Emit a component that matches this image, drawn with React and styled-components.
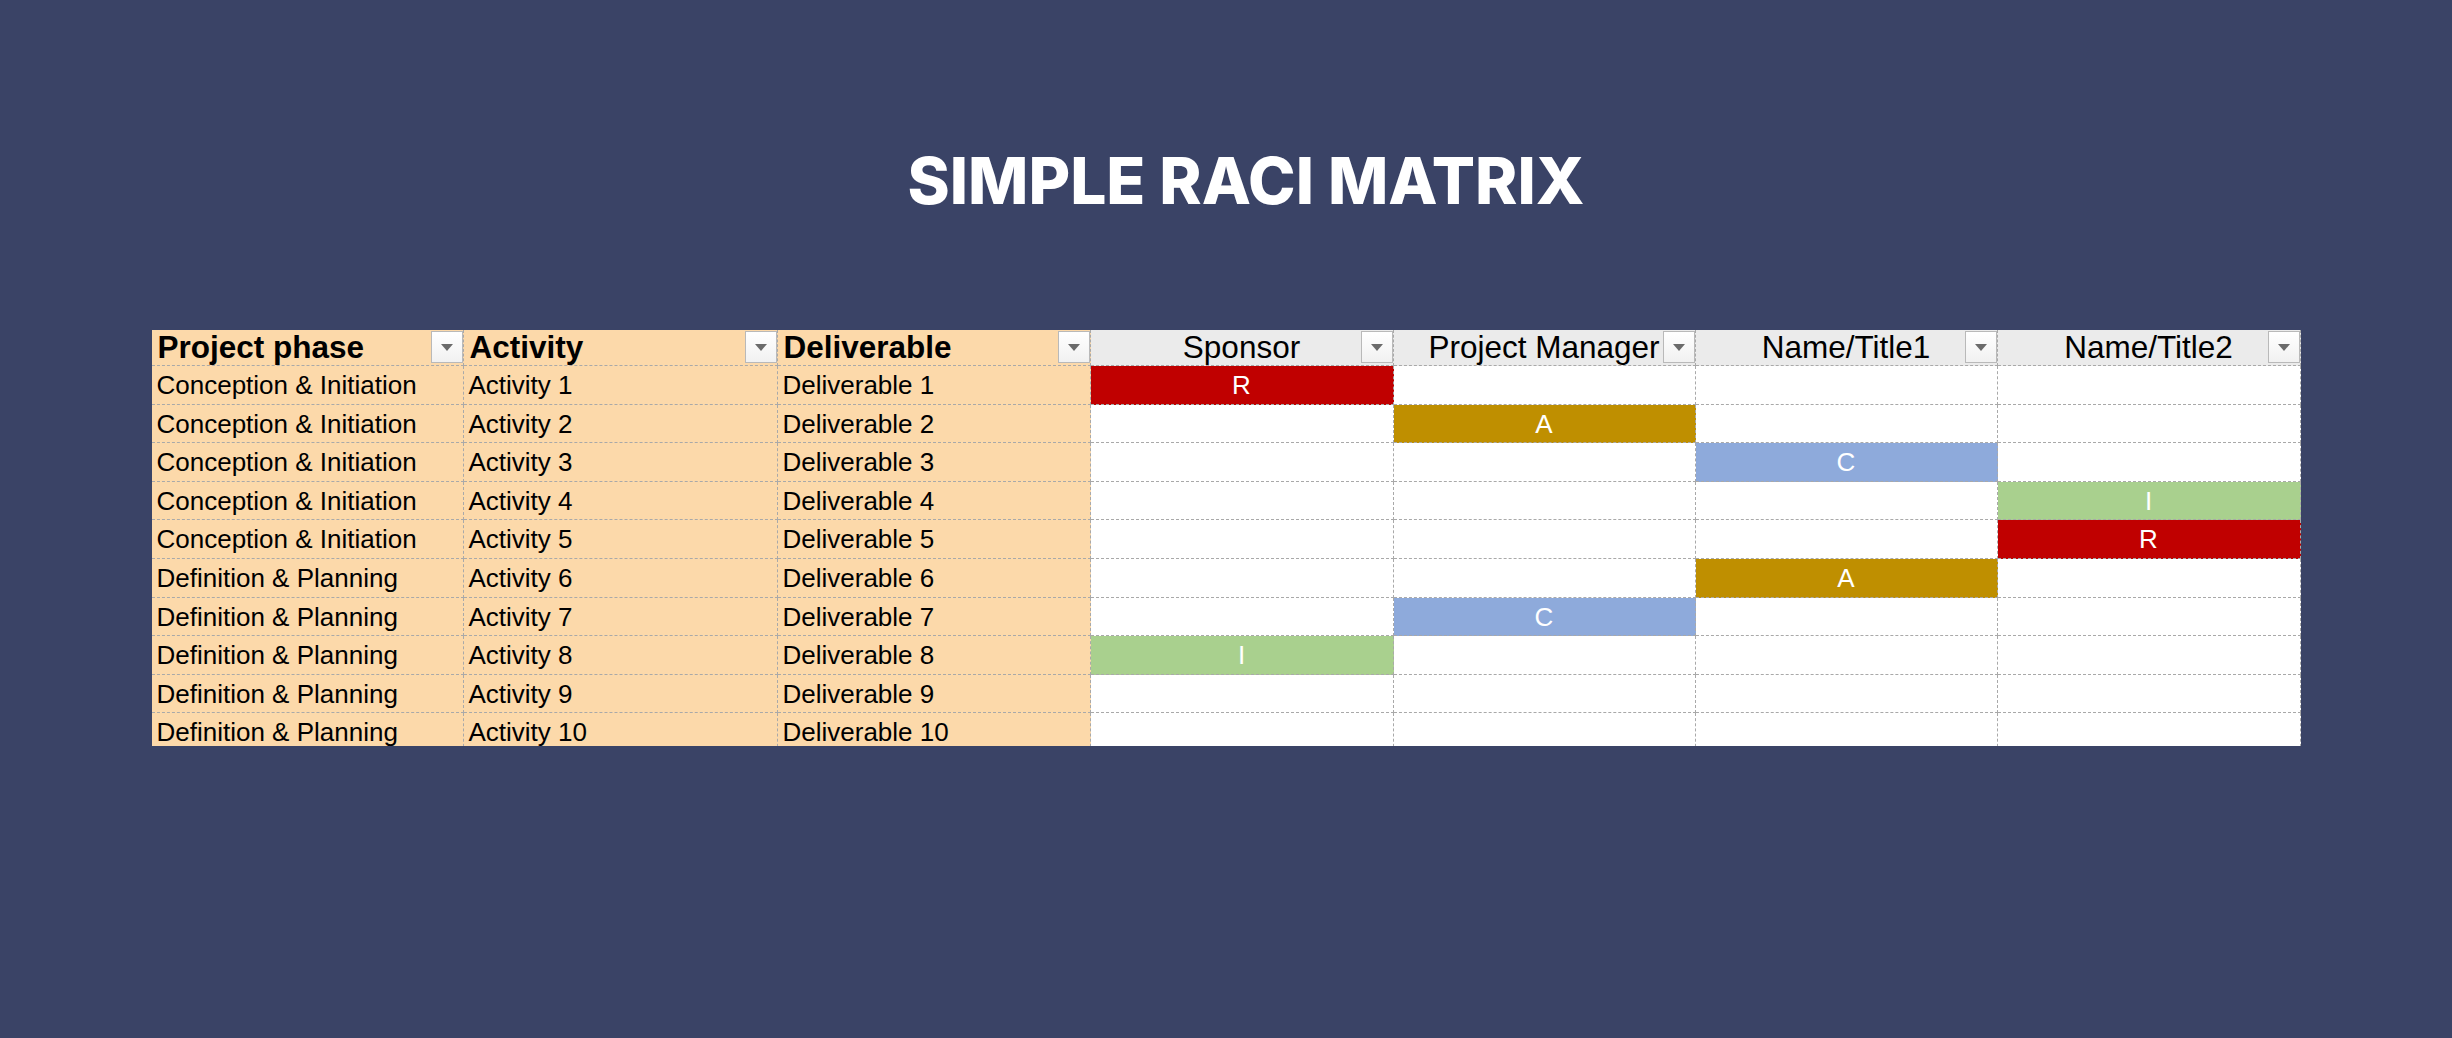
import styled, { createGlobalStyle } from "styled-components";

const GlobalStyle = createGlobalStyle`
  html, body {
    margin: 0;
    padding: 0;
    background: #3a4366;
  }
`;

const roles = ["Sponsor", "Project Manager", "Name/Title1", "Name/Title2"];

const fills = {
  R: "#c00000",
  A: "#bf8f00",
  C: "#8eaadb",
  I: "#a9d08e",
};

// [phase, activity, deliverable, letter, role index]
const rows = [
  ["Conception & Initiation", "Activity 1", "Deliverable 1", "R", 0],
  ["Conception & Initiation", "Activity 2", "Deliverable 2", "A", 1],
  ["Conception & Initiation", "Activity 3", "Deliverable 3", "C", 2],
  ["Conception & Initiation", "Activity 4", "Deliverable 4", "I", 3],
  ["Conception & Initiation", "Activity 5", "Deliverable 5", "R", 3],
  ["Definition & Planning", "Activity 6", "Deliverable 6", "A", 2],
  ["Definition & Planning", "Activity 7", "Deliverable 7", "C", 1],
  ["Definition & Planning", "Activity 8", "Deliverable 8", "I", 0],
  ["Definition & Planning", "Activity 9", "Deliverable 9", null, -1],
  ["Definition & Planning", "Activity 10", "Deliverable 10", null, -1],
];

const Page = styled.div`
  min-height: 1038px;
  display: flex;
  flex-direction: column;
  align-items: center;
  padding-top: 149px;
  box-sizing: border-box;
`;

const Title = styled.h1`
  margin: 0 0 117px 40px;
  font-family: "Inter", "Liberation Sans", sans-serif;
  font-weight: 800;
  font-size: 64px;
  line-height: 64px;
  color: #ffffff;
`;

const Sheet = styled.div`
  display: grid;
  grid-template-columns: 312px 314px 313px 303px 302px 302px 303px;
  grid-template-rows: 36px repeat(10, 38.6px);
  height: 416px;
  overflow: hidden;
  font-family: "Liberation Sans", Arial, sans-serif;
  color: #000;
`;

const HeaderCell = styled.div`
  position: relative;
  box-sizing: border-box;
  background: ${(p) => (p.$role ? "#ebebeb" : "#fcd9aa")};
  border-right: 1px dashed #a9a9a9;
  border-bottom: 1px dashed #a9a9a9;
  font-size: 31.5px;
  font-weight: ${(p) => (p.$role ? 400 : 700)};
  line-height: 34px;
  text-align: ${(p) => (p.$role ? "center" : "left")};
  padding: 0 ${(p) => (p.$role ? "0" : "6px")};
  white-space: nowrap;
  overflow: hidden;
`;

const FilterButton = styled.span`
  position: absolute;
  top: 1px;
  right: 0;
  width: 32px;
  height: 32px;
  box-sizing: border-box;
  border: 1px solid #b9b9b9;
  background: linear-gradient(#ffffff, #f1f1f1);
  display: flex;
  align-items: center;
  justify-content: center;
`;

const Cell = styled.div`
  box-sizing: border-box;
  background: ${(p) => p.$fill || (p.$peach ? "#fcd9aa" : "#ffffff")};
  border-right: 1px dashed #a9a9a9;
  border-bottom: 1px dashed #a9a9a9;
  font-size: 26px;
  line-height: 38px;
  padding: 0 ${(p) => (p.$peach ? "5px" : "0")};
  text-align: ${(p) => (p.$peach ? "left" : "center")};
  color: ${(p) => (p.$fill ? "#ffffff" : "#000000")};
  white-space: nowrap;
  overflow: hidden;
`;

const Arrow = () => (
  <svg width="12" height="7" viewBox="0 0 12 7">
    <path d="M0 0 H12 L6 7 Z" fill="#6b6b6b" />
  </svg>
);

const Header = ({ label, role }) => (
  <HeaderCell $role={role}>
    {label}
    <FilterButton>
      <Arrow />
    </FilterButton>
  </HeaderCell>
);

export default function App() {
  return (
    <Page>
      <GlobalStyle />
      <Title>SIMPLE RACI MATRIX</Title>
      <Sheet>
        <Header label="Project phase" />
        <Header label="Activity" />
        <Header label="Deliverable" />
        {roles.map((r) => (
          <Header key={r} label={r} role />
        ))}
        {rows.map(([phase, act, del, letter, idx]) => (
          <>
            <Cell key={act + "p"} $peach>{phase}</Cell>
            <Cell key={act + "a"} $peach>{act}</Cell>
            <Cell key={act + "d"} $peach>{del}</Cell>
            {roles.map((r, i) => (
              <Cell key={act + r} $fill={i === idx ? fills[letter] : null}>
                {i === idx ? letter : ""}
              </Cell>
            ))}
          </>
        ))}
      </Sheet>
    </Page>
  );
}
